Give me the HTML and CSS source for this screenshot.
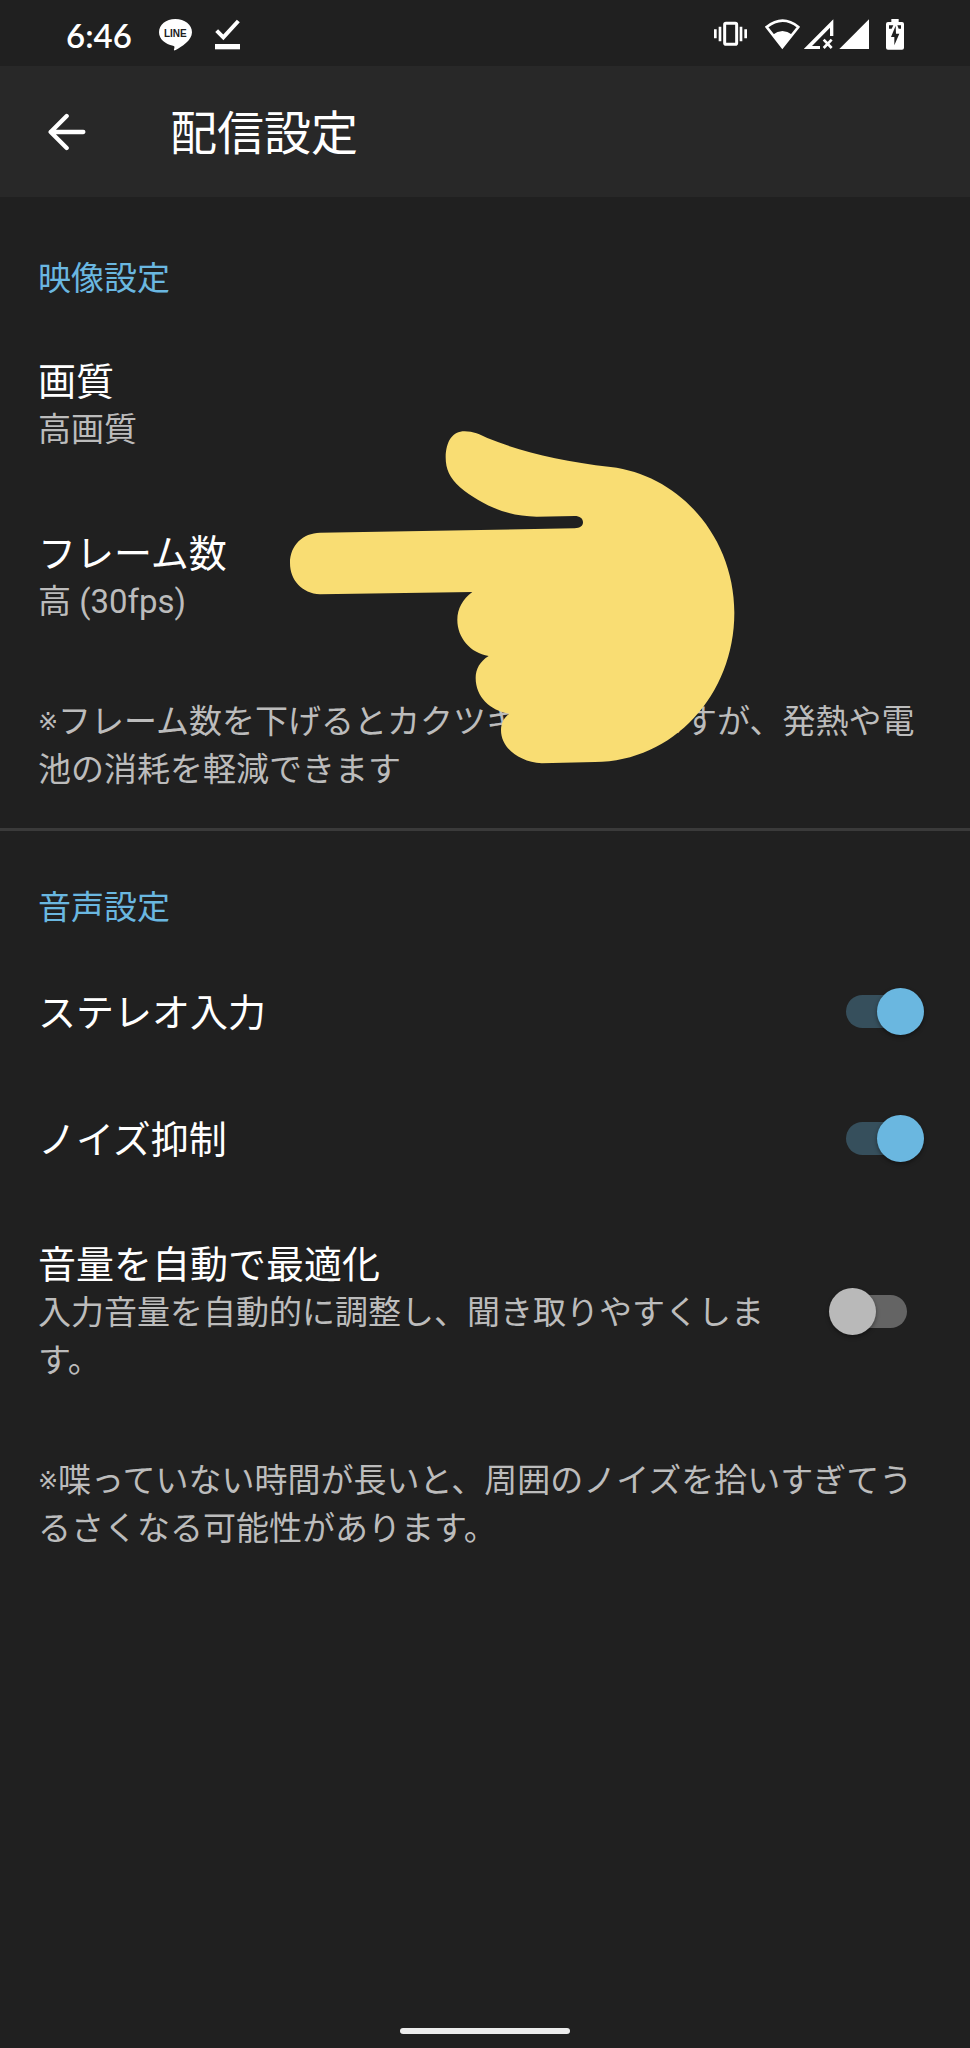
FILE: index.html
```html
<!DOCTYPE html>
<html lang="ja">
<head>
<meta charset="utf-8">
<meta name="viewport" content="width=device-width, initial-scale=1">
<title>配信設定</title>
<link rel="stylesheet" href="styles.css">
</head>
<body>
<div class="screen">
  <div class="status-bar">
    <div class="status-left">
      <span class="clock">6:46</span>
      <svg class="icon-line" width="33" height="36" viewBox="357 45 99 108" aria-hidden="true">
        <path fill="#fff" d="M406 57C378 57 357 74 357 97C357 118 376 133 399 137C405 138 404 141 402 148C401 152 403 152 407 150C424 141 456 122 456 97C456 74 434 57 406 57Z"/>
        <text class="line-word" x="406" y="110" text-anchor="middle">LINE</text>
      </svg>
      <svg class="icon-done" width="25" height="36" viewBox="525 45 75 108" aria-hidden="true">
        <path fill="none" stroke="#fff" stroke-width="12" d="M530 92L550 112L595 63"/>
        <rect x="525" y="132" width="75" height="16" fill="#fff"/>
      </svg>
    </div>
    <div class="status-right">
      <svg class="icon-vibrate" width="33" height="36" viewBox="72 45 99 108" aria-hidden="true">
        <rect x="104" y="70" width="36" height="63" rx="4" fill="none" stroke="#fff" stroke-width="9"/>
        <path fill="none" stroke="#fff" stroke-width="8" d="M90 80V124M153 80V124M76 88V115M167 88V115"/>
      </svg>
      <svg class="icon-wifi" width="35" height="36" viewBox="225 45 105 108" aria-hidden="true">
        <path fill="none" stroke="#fff" stroke-width="8" d="M230 81Q278 43 325 81L277 141Z"/>
        <path fill="#fff" d="M248 104Q277 82 307 104L277 145Z"/>
      </svg>
      <svg class="icon-nosim" width="30" height="36" viewBox="342 45 90 108" aria-hidden="true">
        <path fill="#fff" d="M430 58V108H420V83L366 138H390V147H341Z"/>
        <path fill="none" stroke="#fff" stroke-width="8" d="M401 119L425 144M425 119L401 144"/>
      </svg>
      <svg class="icon-signal" width="30" height="36" viewBox="447 45 90 108" aria-hidden="true">
        <path fill="#fff" d="M537 58V147H448Z"/>
      </svg>
      <svg class="icon-battery" width="18" height="36" viewBox="588 45 54 108" aria-hidden="true">
        <path fill="#fff" d="M604 57H626V66H636Q642 66 642 72V143Q642 149 636 149H594Q588 149 588 143V72Q588 66 594 66H604Z"/>
        <path fill="#202020" d="M597 76H610L605 86H597ZM622 76H633V86H626ZM617 77L603 111H613V136L628 101H618Z"/>
      </svg>
    </div>
  </div>

  <header class="app-bar">
    <button class="back" type="button" aria-label="戻る">
      <svg width="38" height="38" viewBox="143 159 114 114" aria-hidden="true">
        <path fill="none" stroke="#fff" stroke-width="13" stroke-linecap="round" stroke-linejoin="round" d="M249 216H151M199 168L151 216L199 264"/>
      </svg>
    </button>
    <h1 class="title">配信設定</h1>
  </header>

  <main class="settings">
    <section class="group">
      <h2 class="group-title">映像設定</h2>
      <div class="row">
        <div class="row-text">
          <div class="name">画質</div>
          <div class="summary">高画質</div>
        </div>
      </div>
      <div class="row">
        <div class="row-text">
          <div class="name">フレーム数</div>
          <div class="summary">高 (30fps)</div>
        </div>
      </div>
      <p class="note"><span class="mark">※</span>フレーム数を下げるとカクツキが発生しますが、発熱や電池の消耗を軽減できます</p>
    </section>

    <section class="group">
      <h2 class="group-title">音声設定</h2>
      <div class="row">
        <div class="row-text">
          <label class="name" for="stereo">ステレオ入力</label>
        </div>
        <input class="switch" id="stereo" type="checkbox" role="switch" checked>
      </div>
      <div class="row">
        <div class="row-text">
          <label class="name" for="noise">ノイズ抑制</label>
        </div>
        <input class="switch" id="noise" type="checkbox" role="switch" checked>
      </div>
      <div class="row">
        <div class="row-text">
          <label class="name" for="volume">音量を自動で最適化</label>
          <div class="summary">入力音量を自動的に調整し、聞き取りやすくします。</div>
        </div>
        <input class="switch" id="volume" type="checkbox" role="switch">
      </div>
      <p class="note"><span class="mark">※</span>喋っていない時間が長いと、周囲のノイズを拾いすぎてうるさくなる可能性があります。</p>
    </section>

    <svg class="hand" width="500" height="380" viewBox="0 0 1500 1140" aria-hidden="true">
      <path fill="#f9dd73" d="M150 398L914 385C930 384 939 378 939 367C939 355 929 348 914 348L800 350C710 350 630 312 570 262C539 234 527 208 527 172C528 124 547 94 584 94C609 94 631 104 652 114C758 157 870 183 1022 201C1232 226 1393 414 1393 638C1393 885 1209 1084 975 1086L815 1090C748 1085 693 1045 693 990C693 969 702 953 718 941C660 932 617 890 617 834C617 807 630 784 656 768C601 759 562 713 562 660C562 626 578 598 607 576L150 583C96 580 60 541 60 489C60 435 99 399 150 398Z"/>
    </svg>
  </main>

  <footer class="nav-bar"><span class="nav-handle"></span></footer>
</div>
</body>
</html>
```
FILE: styles.css
```css
* {
  box-sizing: border-box;
}

body {
  margin: 0;
  background: #202020;
  color: #fff;
  font-family: Roboto, "Noto Sans CJK JP", sans-serif;
}

.screen {
  display: flex;
  flex-direction: column;
  min-height: 100vh;
}

.status-bar {
  display: flex;
  align-items: center;
  justify-content: space-between;
  height: 66px;
  padding: 0 66px;
}

.status-left,
.status-right {
  display: flex;
  align-items: center;
}

.clock {
  padding-top: 3px;
  font: 600 33px/36px Lato, sans-serif;
}

.icon-line {
  margin-left: 27px;
}

.line-word {
  font: 700 30px "Liberation Sans", sans-serif;
  fill: #202020;
}

.icon-done {
  margin-left: 23px;
}

.icon-wifi {
  margin-left: 18px;
}

.icon-nosim {
  margin-left: 4px;
}

.icon-signal {
  margin-left: 5px;
}

.icon-battery {
  margin-left: 17px;
}

.app-bar {
  display: flex;
  align-items: center;
  gap: 84px;
  height: 131px;
  padding: 0 38px 0 48px;
  background: #282828;
}

.back {
  display: flex;
  padding: 0;
  border: 0;
  background: none;
}

.title {
  margin: 0;
  padding-top: 4px;
  font-size: 47px;
  font-weight: 400;
  line-height: 64px;
}

.settings {
  position: relative;
  flex: 1;
  padding-top: 5px;
}

.group + .group {
  border-top: 3px solid #3a3a3a;
}

.group-title {
  margin: 0;
  padding: 53px 38px 17px;
  color: #6ab7e0;
  font-size: 33px;
  font-weight: 400;
  line-height: 48px;
}

.row {
  display: flex;
  align-items: center;
  justify-content: space-between;
  gap: 40px;
  min-height: 127px;
  padding: 38px 46px 38px 38px;
}

.row-text {
  flex: 1;
}

.name {
  display: block;
  font-size: 38px;
  line-height: 48px;
}

.summary,
.note {
  color: #bcbcbc;
  font-size: 33px;
  line-height: 48px;
}

.note {
  margin: 0;
  padding: 34px 38px;
}

.mark {
  display: inline-block;
  font-family: "DejaVu Sans", sans-serif;
  font-size: 24px;
  line-height: 24px;
  vertical-align: 3px;
}

.switch {
  appearance: none;
  display: grid;
  align-items: center;
  flex: none;
  width: 95px;
  height: 47px;
  margin: 0 0 3px;
}

.switch::before,
.switch::after {
  content: "";
  grid-area: 1 / 1;
}

.switch::before {
  justify-self: center;
  width: 61px;
  height: 33px;
  border-radius: 17px;
  background: #646464;
}

.switch::after {
  justify-self: start;
  width: 47px;
  height: 47px;
  border-radius: 50%;
  background: #b9b9b9;
  box-shadow: 0 2px 4px rgba(0, 0, 0, 0.4);
}

.switch:checked::before {
  background: #364f5c;
}

.switch:checked::after {
  justify-self: end;
  background: #6ab7e0;
}

.hand {
  position: absolute;
  top: 203px;
  left: 270px;
}

.nav-bar {
  display: flex;
  justify-content: center;
  padding-bottom: 14px;
}

.nav-handle {
  width: 170px;
  height: 6px;
  border-radius: 3px;
  background: #ececec;
}
```
